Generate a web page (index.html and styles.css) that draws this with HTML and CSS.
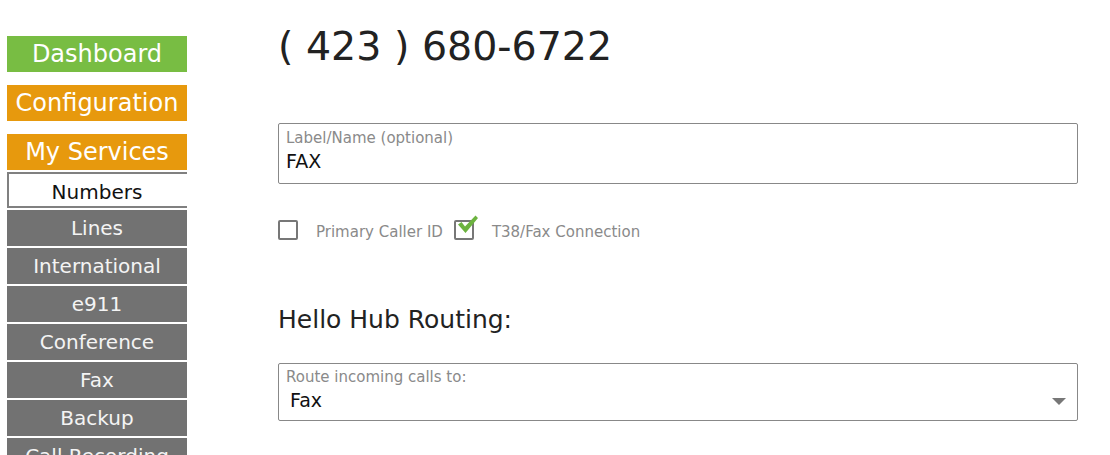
FILE: index.html
```html
<!DOCTYPE html>
<html lang="en">
<head>
    <meta charset="UTF-8">
    <title>Number Settings</title>
    <link rel="stylesheet" href="styles.css">
</head>
<body>
    <div class="page">
        <nav class="sidebar">
            <a class="menu menu-green" href="#">Dashboard</a>
            <a class="menu menu-orange" href="#">Configuration</a>
            <a class="menu menu-orange" href="#">My Services</a>
            <div class="submenu">
                <a class="sub active" href="#">Numbers</a>
                <a class="sub" href="#">Lines</a>
                <a class="sub" href="#">International</a>
                <a class="sub" href="#">e911</a>
                <a class="sub" href="#">Conference</a>
                <a class="sub" href="#">Fax</a>
                <a class="sub" href="#">Backup</a>
                <a class="sub" href="#">Call Recording</a>
                <a class="sub" href="#">Voicemail</a>
            </div>
        </nav>

        <main class="content">
            <h1 class="phone">( 423 ) 680-6722</h1>

            <div class="field field-text">
                <label for="label">Label/Name (optional)</label>
                <input type="text" id="label" value="FAX">
            </div>

            <div class="options">
                <label class="check">
                    <span class="box"></span>
                    <span class="check-text">Primary Caller ID</span>
                </label>
                <label class="check">
                    <span class="box checked">
                        <svg class="tick" width="22" height="19" viewBox="0 0 22 19">
                            <path d="M1 9.5 L4.5 7 L8 11.5 L18.5 0.5 L21 3 L8.5 18 Z" fill="#6cb33f"/>
                        </svg>
                    </span>
                    <span class="check-text">T38/Fax Connection</span>
                </label>
            </div>

            <h2 class="section-title">Hello Hub Routing:</h2>

            <div class="field field-select">
                <label for="route">Route incoming calls to:</label>
                <select id="route">
                    <option>Fax</option>
                    <option>Voicemail</option>
                    <option>Line</option>
                </select>
                <span class="arrow"></span>
            </div>
        </main>
    </div>
</body>
</html>
```

FILE: styles.css
```css
/* Base */
* {
    margin: 0;
    padding: 0;
    box-sizing: border-box;
}

html, body {
    height: 100%;
    overflow: hidden;
}

body {
    font-family: 'DejaVu Sans', sans-serif;
    background: #ffffff;
    color: #222222;
}

.page {
    display: flex;
    align-items: flex-start;
    padding-left: 7px;
}

/* Menu de gauche */
.sidebar {
    width: 180px;
    padding-top: 36px;
    display: flex;
    flex-direction: column;
    flex-shrink: 0;
}

.menu {
    display: block;
    height: 36px;
    line-height: 37px;
    font-size: 24px;
    color: #ffffff;
    text-align: center;
    text-decoration: none;
    margin-bottom: 13px;
}

.menu-green {
    background-color: #78bd43;
}

.menu-orange {
    background-color: #e7990d;
}

.menu-orange:last-of-type {
    margin-bottom: 2px;
}

.submenu {
    display: flex;
    flex-direction: column;
    gap: 2px;
}

.sub {
    display: block;
    height: 36px;
    line-height: 36px;
    font-size: 20px;
    color: #f4f4f4;
    background-color: #727272;
    text-align: center;
    text-decoration: none;
    overflow: hidden;
    white-space: nowrap;
}

.sub.active {
    background-color: #ffffff;
    color: #111111;
    border: 2px solid #808080;
    border-right: none;
    padding-right: 2px;
}

/* Contenu */
.content {
    margin-left: 91px;
    width: 800px;
    padding-top: 22px;
}

.phone {
    font-size: 39.5px;
    line-height: 48px;
    font-weight: normal;
    color: #222222;
}

.field {
    position: relative;
    border: 1px solid #888888;
    border-radius: 2px;
    padding: 5px 7px 11px;
}

.field label {
    display: block;
    font-size: 15px;
    line-height: 18px;
    color: #8a8a8a;
}

.field input,
.field select {
    display: block;
    width: 100%;
    border: none;
    outline: none;
    background: transparent;
    font-family: 'DejaVu Sans', sans-serif;
    font-size: 19px;
    line-height: 22px;
    height: 22px;
    margin-top: 3px;
    color: #111111;
}

.field-text {
    margin-top: 53px;
}

.field-select {
    margin-top: 28px;
    padding: 4px 7px 9px;
}

.field select {
    appearance: none;
    -webkit-appearance: none;
    padding-left: 4px;
}

.arrow {
    position: absolute;
    right: 11px;
    top: 34px;
    width: 0;
    height: 0;
    border-left: 7px solid transparent;
    border-right: 7px solid transparent;
    border-top: 7px solid #777777;
    pointer-events: none;
}

/* Cases à cocher */
.options {
    display: flex;
    align-items: center;
    margin-top: 36px;
    height: 20px;
}

.check {
    display: flex;
    align-items: center;
    margin-right: 11px;
}

.box {
    position: relative;
    width: 20px;
    height: 20px;
    border: 2px solid #777777;
    border-radius: 2px;
}

.tick {
    position: absolute;
    left: 1px;
    top: -7px;
}

.check-text {
    margin-left: 18px;
    padding-top: 3px;
    font-size: 15px;
    color: #8a8a8a;
}

.section-title {
    margin-top: 65px;
    font-size: 25px;
    line-height: 30px;
    font-weight: normal;
    color: #222222;
}
```
